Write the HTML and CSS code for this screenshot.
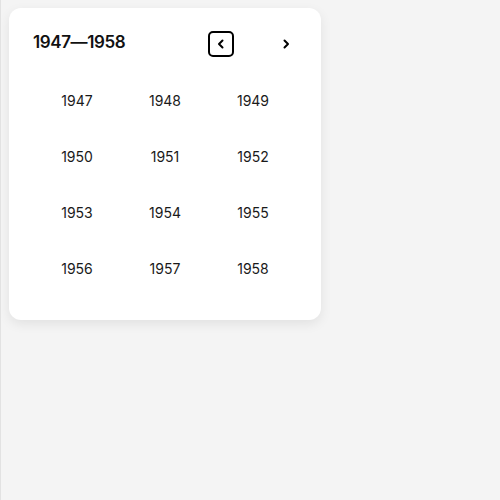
FILE: index.html
```html
<!DOCTYPE html>
<html lang="en">
<head>
<meta charset="utf-8">
<title>Year picker</title>
<link rel="stylesheet" href="styles.css">
</head>
<body>
  <div class="picker">
    <div class="picker-header">
      <div class="picker-title">1947—1958</div>
      <div class="picker-nav">
        <button class="nav-btn nav-btn-focus" aria-label="Previous">
          <svg width="10" height="12" viewBox="0 0 10 12"><path d="M6.5 2.5 L3 6 L6.5 9.5" fill="none" stroke="#000" stroke-width="2" stroke-linecap="round" stroke-linejoin="round"/></svg>
        </button>
        <button class="nav-btn" aria-label="Next">
          <svg width="10" height="12" viewBox="0 0 10 12"><path d="M3.5 2.5 L7 6 L3.5 9.5" fill="none" stroke="#000" stroke-width="2" stroke-linecap="round" stroke-linejoin="round"/></svg>
        </button>
      </div>
    </div>
    <div class="year-grid">
      <div class="year">1947</div>
      <div class="year">1948</div>
      <div class="year">1949</div>
      <div class="year">1950</div>
      <div class="year">1951</div>
      <div class="year">1952</div>
      <div class="year">1953</div>
      <div class="year">1954</div>
      <div class="year">1955</div>
      <div class="year">1956</div>
      <div class="year">1957</div>
      <div class="year">1958</div>
    </div>
  </div>
</body>
</html>
```
FILE: styles.css
```css
html {
  background: #f4f4f4;
}
body {
  margin: 0;
  min-height: 100vh;
  box-sizing: border-box;
  border-left: 1px solid #e2e2e2;
  padding: 8px 8px;
  font-family: Inter, "Noto Sans", sans-serif;
  color: #1a1a1a;
}
.picker {
  width: 312px;
  height: 312px;
  box-sizing: border-box;
  background: #fff;
  border-radius: 12px;
  box-shadow: 0 4px 12px rgba(0, 0, 0, 0.08);
  padding: 23px 22px 24px 24px;
}
.picker-header {
  display: flex;
  align-items: center;
  justify-content: space-between;
  height: 26px;
  margin-bottom: 15px;
}
.picker-title {
  font-size: 17px;
  font-weight: 600;
  color: #111;
  letter-spacing: -0.4px;
  margin-bottom: 4px;
}
.picker-nav {
  display: flex;
  gap: 39px;
}
.nav-btn {
  width: 26px;
  height: 26px;
  box-sizing: border-box;
  padding: 0;
  border: 2px solid transparent;
  border-radius: 5px;
  background: transparent;
  display: flex;
  align-items: center;
  justify-content: center;
}
.nav-btn-focus {
  border-color: #000;
}
.year-grid {
  display: grid;
  grid-template-columns: repeat(3, 88px);
  grid-auto-rows: 56px;
}
.year {
  display: flex;
  align-items: center;
  justify-content: center;
  font-size: 14px;
  color: #1a1a1a;
}
```
